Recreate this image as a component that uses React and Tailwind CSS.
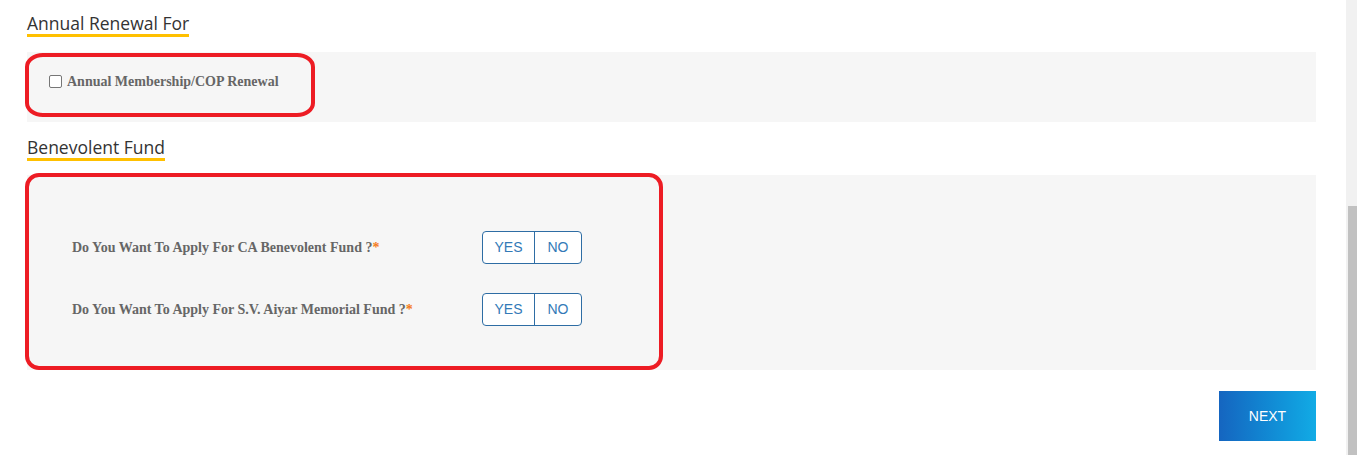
export default function App() {
  const questions = [
    "Do You Want To Apply For CA Benevolent Fund ?",
    "Do You Want To Apply For S.V. Aiyar Memorial Fund ?",
  ];
  return (
    <div className="flex w-[1357px] h-[455px] overflow-hidden bg-white">
      <div className="flex-1 pl-[27px] pr-[30px] pt-[12px] flex flex-col">
        <div>
          <h2 className="inline-block text-[17.5px] leading-[22px] text-[#333] border-b-[3px] border-[#ffc000] font-['Open_Sans',sans-serif]">
            Annual Renewal For
          </h2>
        </div>
        <div className="relative mt-[15px] h-[70px] bg-[#f6f6f6] flex items-center pl-[22px] pb-[12px]">
          <span className="w-[13px] h-[13px] border border-[#767676] rounded-[2px] bg-white"></span>
          <span className="ml-[5px] text-[14px] font-bold text-[#666] font-['Liberation_Serif',serif]">
            Annual Membership/COP Renewal
          </span>
          <div className="absolute left-[-2px] top-[1px] w-[290px] h-[64px] border-[4px] border-[#ed1c24] rounded-[18px_/_14px] pointer-events-none"></div>
        </div>
        <div className="mt-[14px]">
          <h2 className="inline-block text-[17.5px] leading-[22px] text-[#333] border-b-[3px] border-[#ffc000] font-['Open_Sans',sans-serif]">
            Benevolent Fund
          </h2>
        </div>
        <div className="relative mt-[14px] h-[195px] bg-[#f6f6f6] pl-[45px] pt-[56px] flex flex-col gap-[29px]">
          {questions.map((q) => (
            <div key={q} className="flex items-center h-[33px]">
              <div className="w-[410px] text-[14px] font-bold text-[#666] font-['Liberation_Serif',serif]">
                {q}
                <span className="text-[#f47b20]">*</span>
              </div>
              <div className="flex h-[33px] border border-[#2e6da4] rounded-[4px] bg-white font-['Liberation_Sans',sans-serif] text-[14px] text-[#337ab7]">
                <span className="w-[52px] flex items-center justify-center border-r border-[#2e6da4]">YES</span>
                <span className="w-[46px] flex items-center justify-center">NO</span>
              </div>
            </div>
          ))}
          <div className="absolute left-[-2px] top-[-2px] w-[638px] h-[197px] border-[4px] border-[#ed1c24] rounded-[14px] pointer-events-none"></div>
        </div>
        <div className="flex justify-end mt-[21px]">
          <button className="w-[97px] h-[50px] bg-linear-to-r from-[#1565c0] to-[#12abe5] text-white text-[14px] font-['Liberation_Sans',sans-serif]">
            NEXT
          </button>
        </div>
      </div>
      <div className="w-[11px] h-full bg-[#f1f1f1] flex flex-col justify-end pl-[2px]">
        <div className="h-[249px] w-full bg-[#c1c1c1]"></div>
      </div>
    </div>
  );
}
